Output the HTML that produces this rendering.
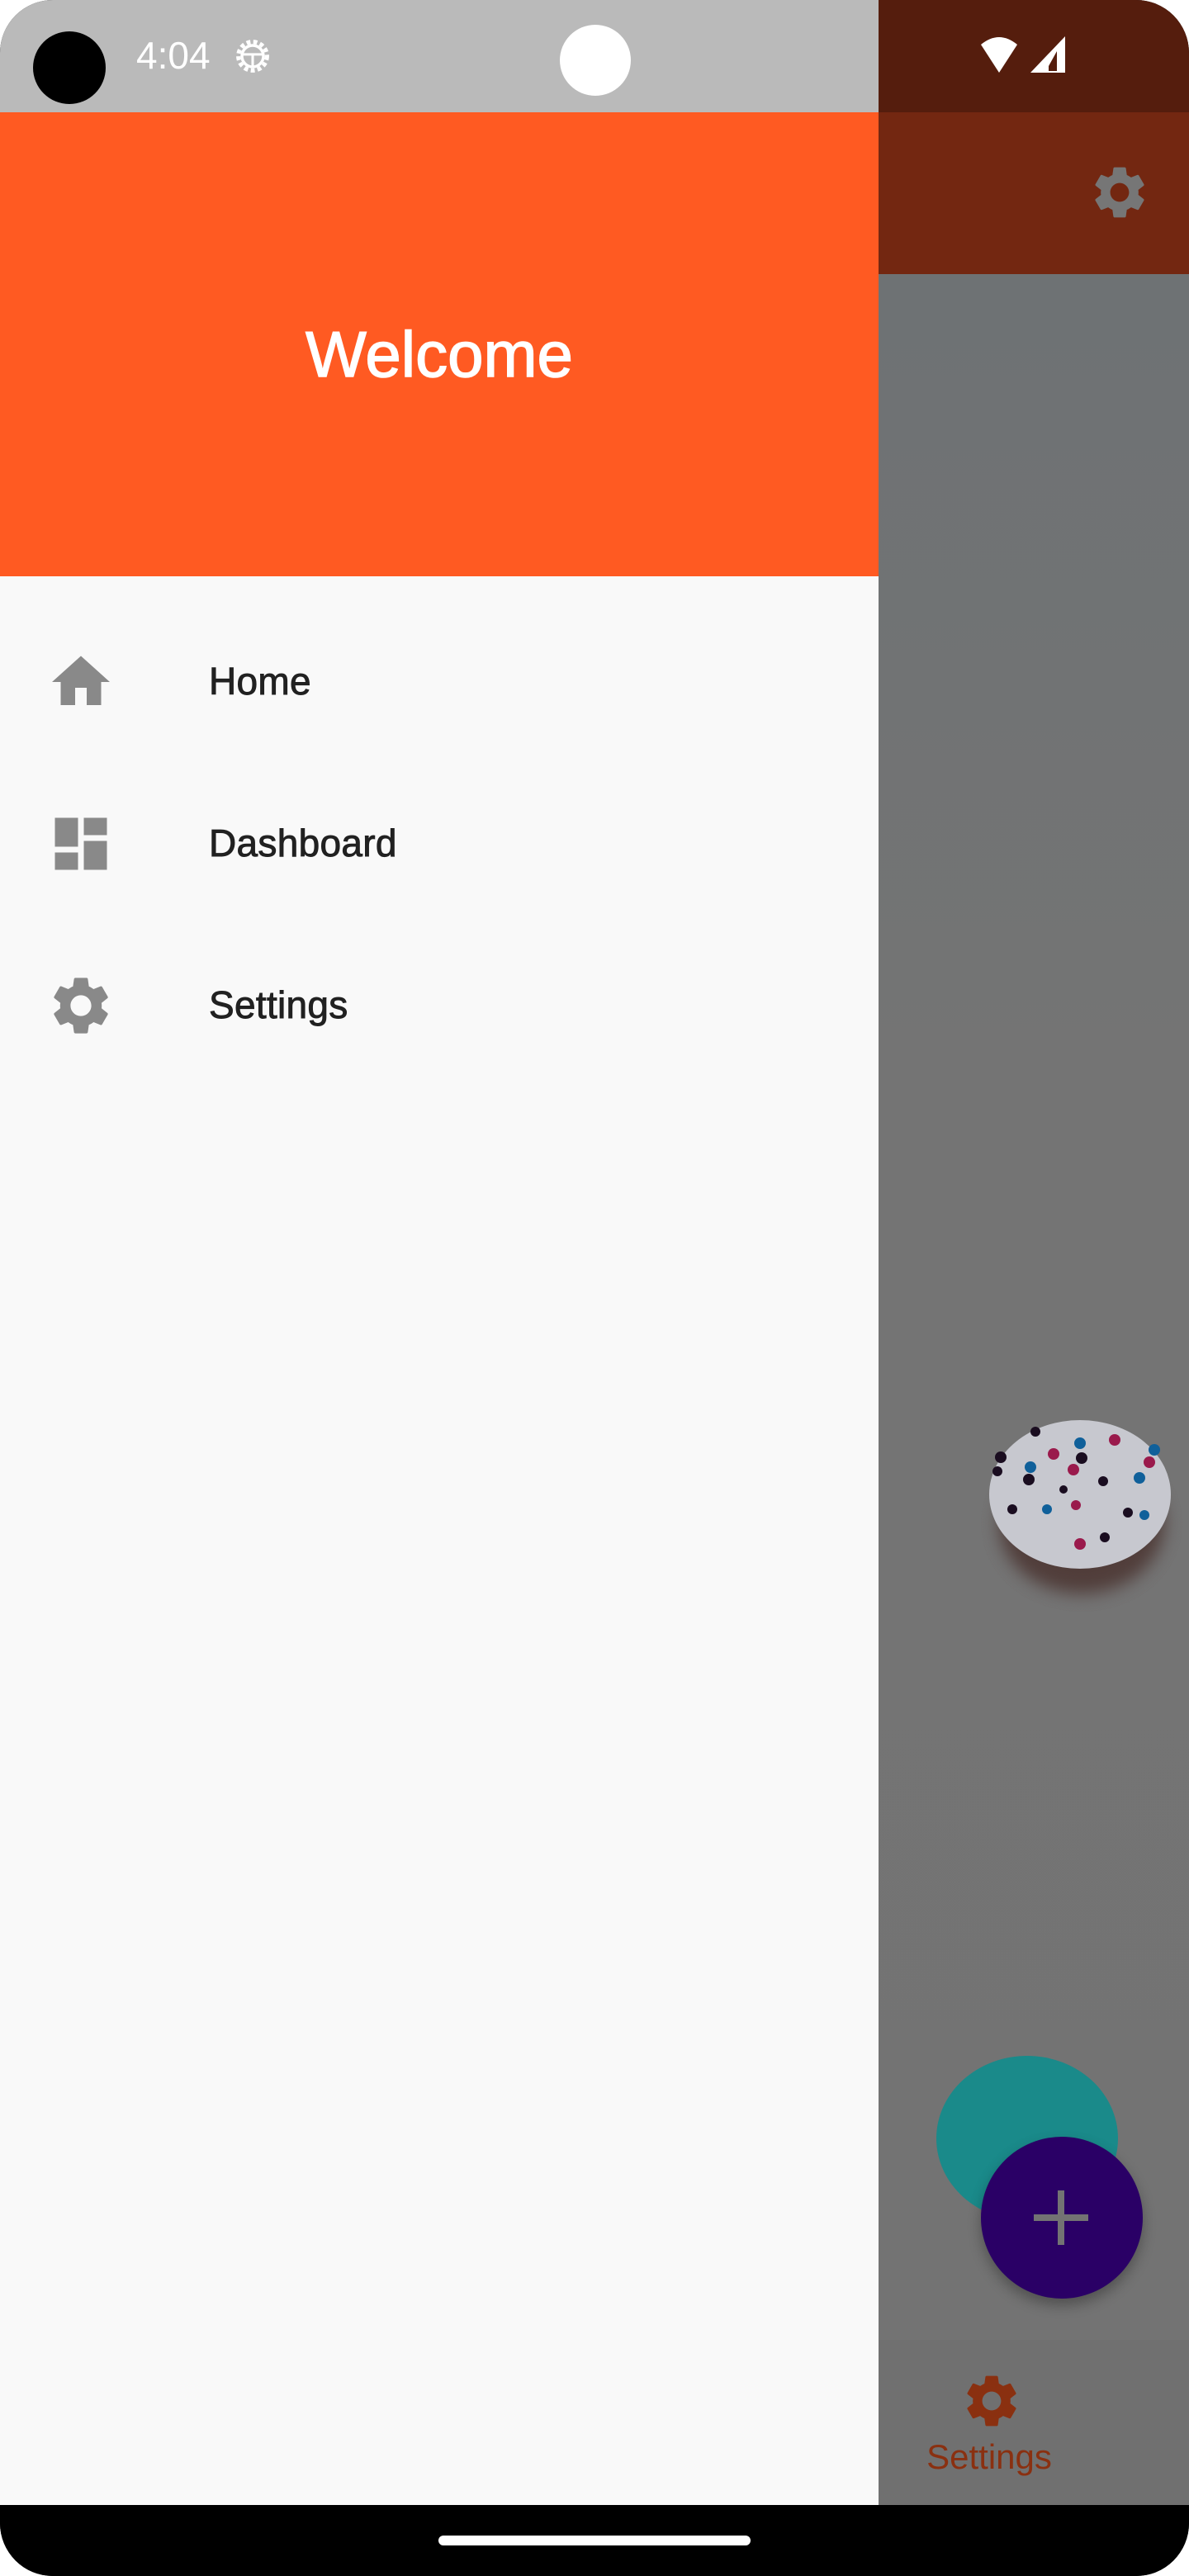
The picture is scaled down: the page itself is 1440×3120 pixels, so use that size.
<!DOCTYPE html>
<html><head><meta charset="utf-8">
<style>
*{margin:0;padding:0;box-sizing:border-box}
html,body{width:1440px;height:3120px;background:#fff;overflow:hidden;font-family:"Liberation Sans",Roboto,sans-serif}
.screen{position:absolute;left:0;top:0;width:1440px;height:3120px;border-radius:64px;overflow:hidden;background:#000}
.abs{position:absolute}
.item{position:absolute;left:0;width:1064px;height:120px}
.item svg{position:absolute;left:56px;top:18px;width:84px;height:84px}
.item span{position:absolute;left:253px;top:32px;font-size:46px;color:#212121;letter-spacing:0.3px;-webkit-text-stroke:0.9px #212121}
</style></head><body>
<div class="screen">
  <div class="abs" style="left:1064px;top:0;width:376px;height:136px;background:#551d0d"></div>
  <div class="abs" style="left:1064px;top:136px;width:376px;height:196px;background:#732711"></div>
  <div class="abs" style="left:1064px;top:332px;width:376px;height:2502px;background:linear-gradient(#6e7274,#747474 40%,#737373)"></div>
  <div class="abs" style="left:1064px;top:2834px;width:376px;height:200px;background:#707070"></div>
  <svg class="abs" style="left:1318px;top:195px;width:76px;height:76px" viewBox="0 0 24 24"><path fill="#767676" d="M19.14 12.94c.04-.3.06-.61.06-.94 0-.32-.02-.64-.07-.94l2.03-1.58a.49.49 0 0 0 .12-.61l-1.92-3.32a.49.49 0 0 0-.59-.22l-2.39.96c-.5-.38-1.03-.7-1.62-.94l-.36-2.54a.48.48 0 0 0-.48-.41h-3.84c-.24 0-.43.17-.47.41l-.36 2.54c-.59.24-1.13.57-1.62.94l-2.39-.96c-.22-.08-.47 0-.59.22L2.74 8.87c-.12.21-.08.47.12.61l2.03 1.58c-.05.3-.09.63-.09.94s.02.64.07.94l-2.03 1.58a.49.49 0 0 0-.12.61l1.92 3.32c.12.22.37.29.59.22l2.39-.96c.5.38 1.03.7 1.62.94l.36 2.54c.05.24.24.41.48.41h3.84c.24 0 .44-.17.47-.41l.36-2.54c.59-.24 1.130-.56 1.62-.94l2.39.96c.22.08.47 0 .59-.22l1.92-3.32c.12-.22.07-.47-.12-.61l-2.01-1.58zM12 15.6c-1.98 0-3.6-1.62-3.6-3.6s1.62-3.6 3.6-3.6 3.6 1.62 3.6 3.6-1.62 3.6-3.6 3.6z"/></svg>
  <div class="abs" style="left:1210px;top:1760px;width:200px;height:170px;border-radius:50%;background:#3a1a15;opacity:.6;filter:blur(10px)"></div>
  <div class="abs" style="left:1198px;top:1720px;width:220px;height:180px;border-radius:50%;background:#c7c8cf"></div>
  <svg class="abs" style="left:1198px;top:1720px;width:220px;height:180px" viewBox="0 0 220 180">
    <g fill="#1a0d20"><circle cx="56" cy="14" r="6"/><circle cx="14" cy="45" r="7"/><circle cx="112" cy="46" r="7"/><circle cx="10" cy="62" r="6"/><circle cx="48" cy="72" r="7"/><circle cx="138" cy="74" r="6"/><circle cx="168" cy="112" r="6"/><circle cx="28" cy="108" r="6"/><circle cx="140" cy="142" r="6"/><circle cx="90" cy="84" r="5"/></g>
    <g fill="#10609a"><circle cx="110" cy="28" r="7"/><circle cx="200" cy="36" r="7"/><circle cx="50" cy="57" r="7"/><circle cx="182" cy="70" r="7"/><circle cx="70" cy="108" r="6"/><circle cx="188" cy="115" r="6"/></g>
    <g fill="#9a1a4c"><circle cx="152" cy="24" r="7"/><circle cx="78" cy="41" r="7"/><circle cx="102" cy="60" r="7"/><circle cx="194" cy="51" r="7"/><circle cx="105" cy="103" r="6"/><circle cx="110" cy="150" r="7"/></g>
  </svg>
  <div class="abs" style="left:1134px;top:2490px;width:220px;height:200px;border-radius:50%;background:#1a8a8a"></div>
  <div class="abs" style="left:1230px;top:2610px;width:60px;height:24px;border-radius:50%;background:#8a9090"></div>
  <div class="abs" style="left:1188px;top:2588px;width:196px;height:196px;border-radius:50%;background:#2a0066;box-shadow:0 8px 16px rgba(0,0,0,.3)"></div>
  <div class="abs" style="left:1252px;top:2682px;width:66px;height:8px;background:#737373"></div>
  <div class="abs" style="left:1281px;top:2653px;width:8px;height:66px;background:#737373"></div>
  <svg class="abs" style="left:1163px;top:2870px;width:76px;height:76px" viewBox="0 0 24 24"><path fill="#8a3010" d="M19.14 12.94c.04-.3.06-.61.06-.94 0-.32-.02-.64-.07-.94l2.03-1.58a.49.49 0 0 0 .12-.61l-1.92-3.32a.49.49 0 0 0-.59-.22l-2.39.96c-.5-.38-1.03-.7-1.62-.94l-.36-2.54a.48.48 0 0 0-.48-.41h-3.84c-.24 0-.43.17-.47.41l-.36 2.54c-.59.24-1.13.57-1.62.94l-2.39-.96c-.22-.08-.47 0-.59.22L2.74 8.87c-.12.21-.08.47.12.61l2.03 1.58c-.05.3-.09.63-.09.94s.02.64.07.94l-2.03 1.58a.49.49 0 0 0-.12.61l1.92 3.32c.12.22.37.29.59.22l2.39-.96c.5.38 1.03.7 1.62.94l.36 2.54c.05.24.24.41.48.41h3.84c.24 0 .44-.17.47-.41l.36-2.54c.59-.24 1.13-.56 1.62-.94l2.39.96c.22.08.47 0 .59-.22l1.92-3.32c.12-.22.07-.47-.12-.61l-2.01-1.58zM12 15.6c-1.98 0-3.6-1.62-3.6-3.6s1.62-3.6 3.6-3.6 3.6 1.62 3.6 3.6-1.62 3.6-3.6 3.6z"/></svg>
  <div class="abs" style="left:1080px;top:2952px;width:236px;text-align:center;font-size:42px;color:#8a3010">Settings</div>

  <svg class="abs" style="left:1186px;top:40px;width:106px;height:52px" viewBox="0 0 106 52"><path fill="#fff" d="M2 14 Q24 -4 46 14 L24 48 Z"/><path fill="#fff" d="M62 48 L104 4 L104 48 Z M94 46 L94 22 L84 40 L84 46 Z" fill-rule="evenodd"/></svg>

  <div class="abs" style="left:0;top:0;width:1064px;height:136px;background:#bababa"></div>
  <div class="abs" style="left:40px;top:38px;width:88px;height:88px;border-radius:50%;background:#000"></div>
  <div class="abs" style="left:165px;top:40px;font-size:46px;color:#fff">4:04</div>
  <svg class="abs" style="left:280px;top:42px;width:52px;height:52px" viewBox="0 0 24 24"><circle cx="12" cy="12" r="8" fill="none" stroke="#fff" stroke-width="2.4" stroke-dasharray="2.2 1.6"/><circle cx="12" cy="12" r="6" fill="none" stroke="#fff" stroke-width="1.6"/><path d="M6 11h12M12 11v7" stroke="#fff" stroke-width="1.4"/></svg>
  <div class="abs" style="left:678px;top:30px;width:86px;height:86px;border-radius:50%;background:#fff"></div>

  <div class="abs" style="left:0;top:136px;width:1064px;height:562px;background:#ff5a22"></div>
  <div class="abs" style="left:0;top:384px;width:1064px;text-align:center;font-size:78px;color:#fff;-webkit-text-stroke:1.5px #fff">Welcome</div>
  <div class="abs" style="left:0;top:698px;width:1064px;height:2336px;background:#f9f9f9"></div>

  <div class="item" style="top:766px">
    <svg viewBox="0 0 24 24"><path fill="#898989" d="M10 20v-6h4v6h5v-8h3L12 3 2 12h3v8z"/></svg>
    <span>Home</span>
  </div>
  <div class="item" style="top:962px">
    <svg viewBox="0 0 24 24"><path fill="#898989" d="M3 13h8V3H3v10zm0 8h8v-6H3v6zm10 0h8V11h-8v10zm0-18v6h8V3h-8z"/></svg>
    <span>Dashboard</span>
  </div>
  <div class="item" style="top:1158px">
    <svg viewBox="0 0 24 24"><path fill="#898989" d="M19.14 12.94c.04-.3.06-.61.06-.94 0-.32-.02-.64-.07-.94l2.03-1.58a.49.49 0 0 0 .12-.61l-1.92-3.32a.49.49 0 0 0-.59-.22l-2.39.96c-.5-.38-1.03-.7-1.62-.94l-.36-2.54a.48.48 0 0 0-.48-.41h-3.84c-.24 0-.43.17-.47.41l-.36 2.54c-.59.24-1.13.57-1.62.94l-2.39-.96c-.22-.08-.47 0-.59.22L2.74 8.87c-.12.21-.08.47.12.61l2.03 1.58c-.05.3-.09.63-.09.94s.02.64.07.94l-2.03 1.58a.49.49 0 0 0-.12.61l1.92 3.32c.12.22.37.29.59.22l2.39-.96c.5.38 1.03.7 1.62.94l.36 2.54c.05.24.24.41.48.41h3.84c.24 0 .44-.17.47-.41l.36-2.54c.59-.24 1.13-.56 1.62-.94l2.39.96c.22.08.47 0 .59-.22l1.92-3.32c.12-.22.07-.47-.12-.61l-2.01-1.58zM12 15.6c-1.98 0-3.6-1.62-3.6-3.6s1.62-3.6 3.6-3.6 3.6 1.62 3.6 3.6-1.62 3.6-3.6 3.6z"/></svg>
    <span>Settings</span>
  </div>

  <div class="abs" style="left:0;top:3034px;width:1440px;height:86px;background:#000"></div>
  <div class="abs" style="left:531px;top:3071px;width:378px;height:12px;border-radius:6px;background:#fff"></div>
</div>
</body></html>
